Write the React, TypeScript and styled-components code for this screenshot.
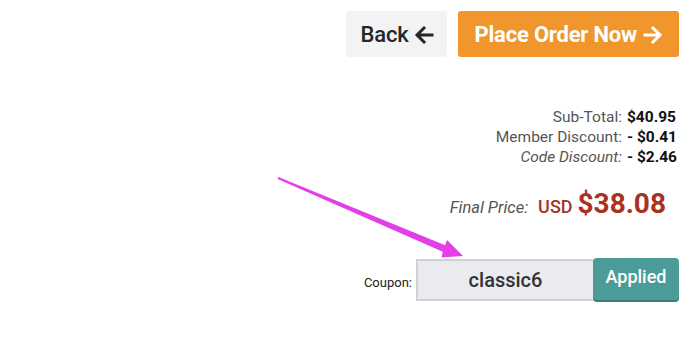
import React from "react";
import styled, { createGlobalStyle } from "styled-components";

const Global = createGlobalStyle`
  html, body { margin: 0; padding: 0; background: #ffffff; }
  body { font-family: Roboto, "Liberation Sans", Arial, sans-serif; }
  * { box-sizing: border-box; }
`;

const Page = styled.div`
  position: relative;
  width: 700px;
  height: 340px;
  display: flex;
  flex-direction: column;
  align-items: flex-end;
  padding: 11px 21px 0 0;
  background: #fff;
`;

const Actions = styled.div`
  display: flex;
  gap: 11px;
`;

const Button = styled.button<{ $variant: "plain" | "primary" }>`
  height: 46px;
  border: none;
  border-radius: 3px;
  font-family: Roboto, "Liberation Sans", Arial, sans-serif;
  font-size: 22px;
  font-weight: ${(p) => (p.$variant === "primary" ? 700 : 500)};
  display: flex;
  align-items: center;
  gap: ${(p) => (p.$variant === "primary" ? "6px" : "5px")};
  padding: ${(p) => (p.$variant === "primary" ? "0 16px 0 17px" : "0 13px 0 15px")};
  background: ${(p) => (p.$variant === "primary" ? "#f0962c" : "#f3f3f4")};
  color: ${(p) => (p.$variant === "primary" ? "#ffffff" : "#262626")};
  letter-spacing: -0.2px;
`;

const ArrowIcon = styled.svg`
  width: 20px;
  height: 20px;
  flex: none;
  margin-top: 1px;
`;

const Summary = styled.div`
  margin-top: 50px;
  display: grid;
  grid-template-columns: auto auto;
  column-gap: 5px;
  font-size: 15.5px;
  line-height: 20px;
  padding-right: 2px;
`;

const Label = styled.span<{ $italic?: boolean }>`
  text-align: right;
  color: #555555;
  font-style: ${(p) => (p.$italic ? "italic" : "normal")};
`;

const Value = styled.span`
  color: #111111;
  font-weight: 700;
`;

const FinalRow = styled.div`
  margin-top: 20px;
  margin-right: 13px;
  display: flex;
  align-items: baseline;
  height: 36px;
`;

const FinalLabel = styled.span`
  font-size: 16.5px;
  font-style: italic;
  color: #555555;
  margin-right: 10px;
`;

const Currency = styled.span`
  font-size: 18px;
  color: #a8311f;
  font-weight: 500;
  margin-right: 5px;
`;

const Amount = styled.span`
  font-size: 28px;
  font-weight: 700;
  color: #a8311f;
`;

const CouponRow = styled.div`
  margin-top: 34px;
  display: flex;
  align-items: center;
`;

const CouponLabel = styled.span`
  font-size: 13px;
  color: #222;
  margin-right: 4px;
  margin-top: 6px;
`;

const CouponInput = styled.div`
  width: 177px;
  height: 42px;
  background: #e9ebee;
  border: 2px solid #cfd1d4;
  border-right: none;
  display: flex;
  align-items: center;
  justify-content: center;
  font-size: 20px;
  font-weight: 500;
  color: #333;
  margin-top: 2px;
`;

const ApplyButton = styled.div`
  width: 86px;
  height: 42px;
  background: #4b9c98;
  border-radius: 4px;
  box-shadow: 0 2px 0 #3a7d7a;
  color: #fff;
  font-size: 18px;
  font-weight: 500;
  display: flex;
  justify-content: center;
  padding-top: 8px;
`;

const Overlay = styled.svg`
  position: absolute;
  left: 0;
  top: 0;
  pointer-events: none;
`;

function Arrow({ dir }: { dir: "left" | "right" }) {
  const d = dir === "left" ? "M18 10H3.5 M10 3L3 10l7 7" : "M2 10h14.5 M10 3l7 7-7 7";
  return (
    <ArrowIcon viewBox="0 0 20 20" fill="none" stroke="currentColor" strokeWidth="3" strokeLinecap="square">
      <path d={d} />
    </ArrowIcon>
  );
}

export default function App() {
  return (
    <>
      <Global />
      <Page>
        <Actions>
          <Button $variant="plain">Back <Arrow dir="left" /></Button>
          <Button $variant="primary">Place Order Now <Arrow dir="right" /></Button>
        </Actions>
        <Summary>
          <Label>Sub-Total:</Label>
          <Value>$40.95</Value>
          <Label>Member Discount:</Label>
          <Value>- $0.41</Value>
          <Label $italic>Code Discount:</Label>
          <Value>- $2.46</Value>
        </Summary>
        <FinalRow>
          <FinalLabel>Final Price:</FinalLabel>
          <Currency>USD</Currency>
          <Amount>$38.08</Amount>
        </FinalRow>
        <CouponRow>
          <CouponLabel>Coupon:</CouponLabel>
          <CouponInput>classic6</CouponInput>
          <ApplyButton>Applied</ApplyButton>
        </CouponRow>
        <Overlay width="700" height="340" viewBox="0 0 700 340">
          <polygon
            points="278.4,177.1 445.2,245.2 447,240 463,256 441.5,257.5 442.8,251.8 277.6,178.9"
            fill="#e23fe6"
          />
        </Overlay>
      </Page>
    </>
  );
}
